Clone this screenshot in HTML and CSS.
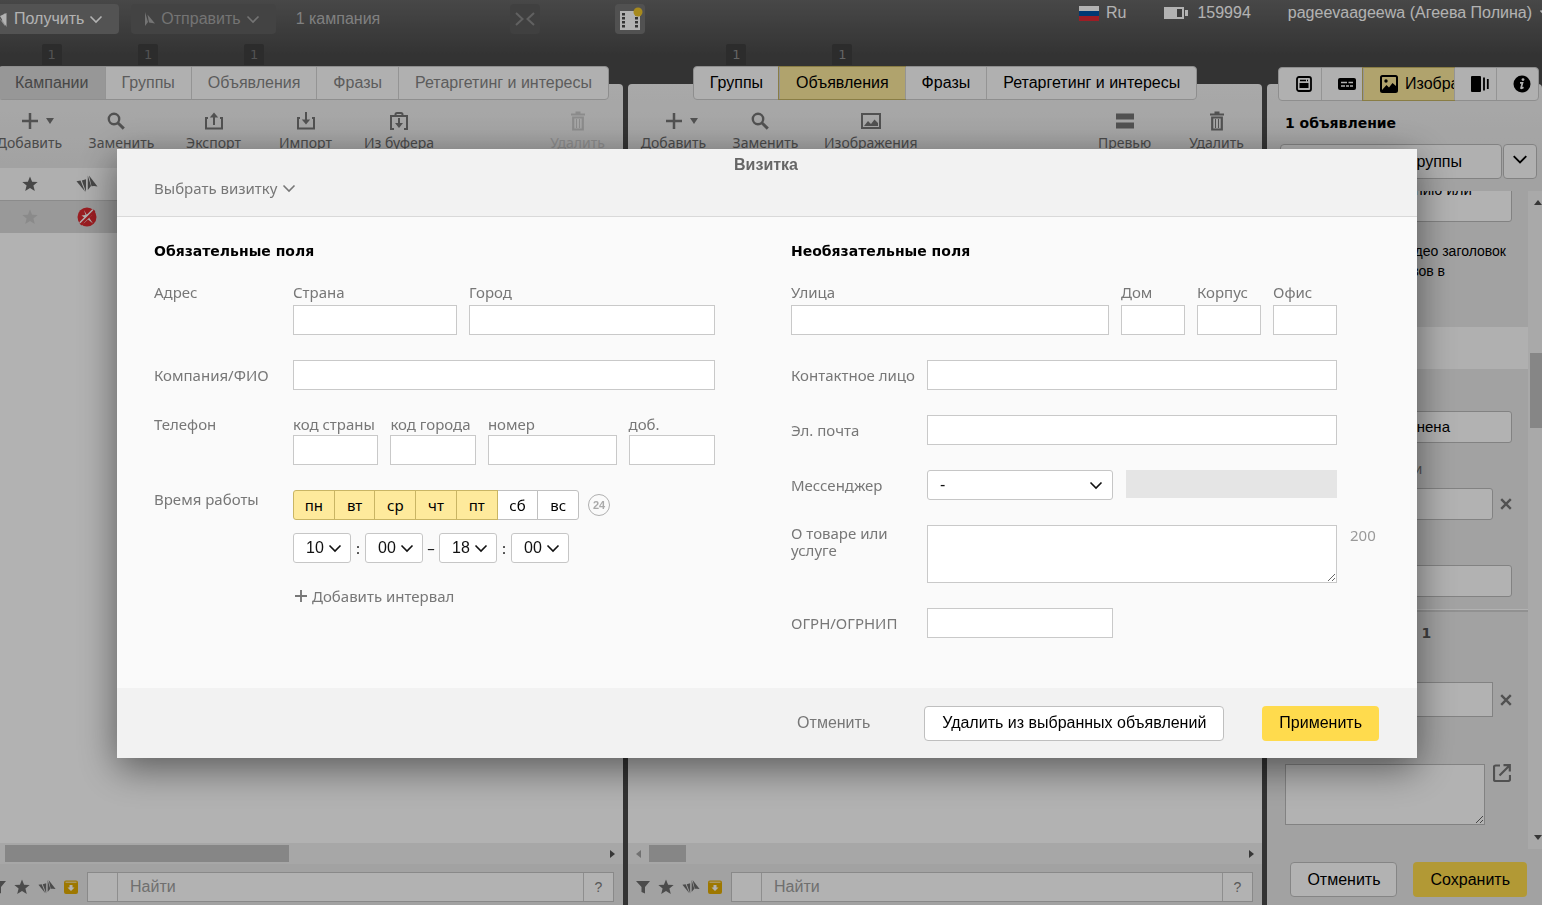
FILE: index.html
```html
<!DOCTYPE html>
<html lang="ru">
<head>
<meta charset="utf-8">
<title>Визитка</title>
<link rel="stylesheet" href="styles.css">
</head>
<body>
<svg class="sprite" aria-hidden="true">
  <symbol id="chev" viewBox="0 0 14 14"><path d="M1.500 4.500 7 10l5.500-5.500" fill="none" stroke="currentColor" stroke-width="1.600"/></symbol>
  <symbol id="plus" viewBox="0 0 16 16"><path d="M8 0v16M0 8h16" stroke="currentColor" stroke-width="2.500" fill="none"/></symbol>
  <symbol id="search" viewBox="0 0 18 18"><circle cx="7" cy="7" r="5.200" fill="none" stroke="currentColor" stroke-width="2.400"/><path d="m10.500 10.500 6.300 6.100" stroke="currentColor" stroke-width="3"/></symbol>
  <symbol id="export" viewBox="0 0 18 18"><path d="M1 6v10.500h16V6M3 6H0M15 6h3M9 13V3" fill="none" stroke="currentColor" stroke-width="2"/><path d="M4.800 5.500 9 .5l4.200 5z" fill="currentColor"/></symbol>
  <symbol id="import" viewBox="0 0 18 18"><path d="M1 6v10.500h16V6M3 6H0M15 6h3M9 0v9" fill="none" stroke="currentColor" stroke-width="2"/><path d="M4.800 7.500 9 12.500l4.200-5z" fill="currentColor"/></symbol>
  <symbol id="buffer" viewBox="0 0 18 18"><path d="M4 17H1V4h16v13h-3M5.500 4V2.500q0-1.500 1.500-1.500h4q1.500 0 1.500 1.500V4M9 6v7" fill="none" stroke="currentColor" stroke-width="2"/><path d="M5 11 9 16l4-5z" fill="currentColor"/></symbol>
  <symbol id="trash" viewBox="0 0 18 20"><path d="M6.500 1.500h5M2 3.500h14" stroke="currentColor" stroke-width="2"/><path d="M4.200 6.500h9.600v12H4.200z" fill="none" stroke="currentColor" stroke-width="2.200"/><path d="M7.500 8v9M10.500 8v9" stroke="currentColor" stroke-width="1"/></symbol>
  <symbol id="image" viewBox="0 0 20 16"><path d="M1 1h18v14H1z" fill="none" stroke="currentColor" stroke-width="2"/><path d="m3 13 4-5 3 3 3.500-4.500L17 10v3z" fill="currentColor"/></symbol>
  <symbol id="preview" viewBox="0 0 18 16"><path d="M0 .5h18v6H0zM0 9.500h18v6H0z" fill="currentColor"/></symbol>
  <symbol id="star" viewBox="0 0 16 16"><path d="m8 .5 2.100 5.200 5.600.3-4.300 3.600 1.400 5.500L8 12.100l-4.800 3 1.400-5.500L.3 6l5.600-.3z" fill="currentColor"/></symbol>
  <symbol id="direct" viewBox="0 0 22 18"><path d="M.5 6.200 4.500 5.500 9 16.500z" fill="currentColor"/><path d="M5.800 5.500 10 4.300V17z" fill="currentColor"/><path d="M11.800.5v14.500l3.200-4zM13 .5l8.500 11-3.500-.5-2.500.2z" fill="currentColor"/></symbol>
  <symbol id="funnel" viewBox="0 0 14 14"><path d="M0 1h14L9 7v6.500L5.500 12V7z" fill="currentColor"/></symbol>
  <symbol id="archive" viewBox="0 0 14 14"><path d="M2 .5h10q2 0 2 2V12q0 2-2 2H2q-2 0-2-2V2.500q0-2 2-2z" fill="#e3ac00"/><path d="M1.500 2.200h11" stroke="#fff" stroke-width=".8"/><path d="M5.500 5h3v2.500h2L7 11 3.500 7.500h2z" fill="#fff"/></symbol>
  <symbol id="noads" viewBox="0 0 20 20"><circle cx="10" cy="10" r="9.500" fill="#dd2a30"/><path d="m7 3 2.500 4.500L15 7.800l-3 2.700 4 6-5-4-4.500 4 1.500-5.500-3.500-2.500 4-.5z" fill="#fff"/><path d="M3.500 17.500 17.500 3.500" stroke="#dd2a30" stroke-width="2.500"/><path d="M2.800 15.800 15.800 2.800" stroke="#fff" stroke-width="1.500"/></symbol>
  <symbol id="cross" viewBox="0 0 12 12"><path d="m1.200 1.200 9.600 9.600m0-9.600L1.200 10.800" stroke="currentColor" stroke-width="2.400"/></symbol>
  <symbol id="external" viewBox="0 0 18 18"><path d="M7 1.500H2.500q-1.500 0-1.500 1.500v12.500Q1 17 2.500 17H15q2 0 2-1.500V11M10.500 1.200h6.300v6.300M16.500 1.500 6.500 11.500" fill="none" stroke="currentColor" stroke-width="2.200"/></symbol>
</svg>

<header class="topbar">
  <button class="top-btn top-btn-get"><svg width="13" height="15" viewBox="0 0 13 15"><path d="M1 3.500 9 14V1L6 4.500V9z" fill="currentColor" opacity=".7"/><path d="M10.500 1v14L4 4z" fill="currentColor"/></svg>Получить<svg width="14" height="14"><use href="#chev"/></svg></button>
  <button class="top-btn top-btn-send"><svg width="13" height="15" viewBox="0 0 13 15"><path d="M2 0v14l3-4zM4.500 2.500 12 11.500l-6-1z" fill="currentColor"/></svg>Отправить<svg width="14" height="14"><use href="#chev"/></svg></button>
  <span class="top-count">1 кампания</span>
  <button class="top-icon top-icon-off" aria-label="Свернуть"><svg width="20" height="16" viewBox="0 0 20 16"><path d="m1 2 6.500 6L1 14M19 2l-6.500 6 6.500 6" fill="none" stroke="currentColor" stroke-width="2"/></svg></button>
  <button class="top-icon top-icon-film" aria-label="Видео"><svg width="30" height="30" viewBox="0 0 30 30"><path d="M5 7h20v19H5z" fill="#fff"/><path d="M8.500 9v16M21.500 9v16" stroke="#494949" stroke-width="3" stroke-dasharray="2.500 1.500"/><circle cx="23" cy="8" r="4.500" fill="#f0c62a"/></svg></button>
  <div class="account">
    <button class="plain lang"><svg width="20" height="15" viewBox="0 0 20 15"><path d="M0 0h20v5H0z" fill="#fff"/><path d="M0 5h20v5H0z" fill="#0052a5"/><path d="M0 10h20v5H0z" fill="#e02a36"/></svg>Ru</button>
    <span class="points"><svg width="24" height="12" viewBox="0 0 24 12"><path d="M0 0h20v12H0zM21 3h3v6h-3z" fill="#fff"/><path d="M13 2h5v8h-5z" fill="#555"/></svg>159994</span>
    <button class="plain user">pageevaageewa (Агеева Полина)<svg width="14" height="14"><use href="#chev"/></svg></button>
  </div>
</header>

<main class="workspace">
  <section class="column column-dim">
    <nav class="tabs">
      <button class="tab tab-active">Кампании<span class="badge">1</span></button>
      <button class="tab">Группы<span class="badge">1</span></button>
      <button class="tab">Объявления<span class="badge">1</span></button>
      <button class="tab">Фразы</button>
      <button class="tab">Ретаргетинг и интересы</button>
    </nav>
    <div class="panel">
      <div class="toolbar">
        <button class="tool"><span class="tool-icon"><svg width="16" height="16"><use href="#plus"/></svg><i class="caret"></i></span>Добавить</button>
        <button class="tool"><span class="tool-icon tool-icon-lead"><svg width="18" height="18"><use href="#search"/></svg></span>Заменить</button>
        <button class="tool"><span class="tool-icon"><svg width="18" height="18"><use href="#export"/></svg></span>Экспорт</button>
        <button class="tool"><span class="tool-icon"><svg width="18" height="18"><use href="#import"/></svg></span>Импорт</button>
        <button class="tool"><span class="tool-icon"><svg width="18" height="18"><use href="#buffer"/></svg></span>Из буфера</button>
        <button class="tool tool-end tool-off" disabled><span class="tool-icon"><svg width="18" height="20"><use href="#trash"/></svg></span>Удалить</button>
      </div>
      <div class="list">
        <table class="grid">
          <thead><tr><th class="c-star"><svg width="16" height="16"><use href="#star"/></svg></th><th class="c-state"><svg width="22" height="18"><use href="#direct"/></svg></th><th></th></tr></thead>
          <tbody><tr><td class="c-star c-faded"><svg width="16" height="16"><use href="#star"/></svg></td><td class="c-state"><svg width="20" height="20"><use href="#noads"/></svg></td><td></td></tr></tbody>
        </table>
      </div>
      <div class="hscroll"><i class="arrow arrow-left"></i><i class="thumb thumb-long"></i><i class="arrow arrow-right"></i></div>
      <div class="finder">
        <svg width="14" height="14"><use href="#funnel"/></svg><svg width="16" height="16"><use href="#star"/></svg><svg width="18" height="16"><use href="#direct"/></svg><svg width="14" height="14"><use href="#archive"/></svg>
        <div class="find-box"><span class="find-cell"></span><input class="find-input" type="text" placeholder="Найти" aria-label="Найти"><button class="find-help">?</button></div>
      </div>
    </div>
  </section>

  <section class="column">
    <nav class="tabs">
      <button class="tab">Группы<span class="badge">1</span></button>
      <button class="tab tab-active">Объявления<span class="badge">1</span></button>
      <button class="tab">Фразы</button>
      <button class="tab">Ретаргетинг и интересы</button>
    </nav>
    <div class="panel">
      <div class="toolbar">
        <button class="tool"><span class="tool-icon"><svg width="16" height="16"><use href="#plus"/></svg><i class="caret"></i></span>Добавить</button>
        <button class="tool"><span class="tool-icon tool-icon-lead"><svg width="18" height="18"><use href="#search"/></svg></span>Заменить</button>
        <button class="tool"><span class="tool-icon"><svg width="20" height="16"><use href="#image"/></svg></span>Изображения</button>
        <button class="tool tool-end"><span class="tool-icon"><svg width="18" height="16"><use href="#preview"/></svg></span>Превью</button>
        <button class="tool"><span class="tool-icon"><svg width="18" height="20"><use href="#trash"/></svg></span>Удалить</button>
      </div>
      <div class="list"></div>
      <div class="hscroll"><i class="arrow arrow-left"></i><i class="thumb thumb-short"></i><i class="arrow arrow-right"></i></div>
      <div class="finder">
        <svg width="14" height="14"><use href="#funnel"/></svg><svg width="16" height="16"><use href="#star"/></svg><svg width="18" height="16"><use href="#direct"/></svg><svg width="14" height="14"><use href="#archive"/></svg>
        <div class="find-box"><span class="find-cell"></span><input class="find-input" type="text" placeholder="Найти" aria-label="Найти"><button class="find-help">?</button></div>
      </div>
    </div>
  </section>

  <aside class="column inspector">
    <nav class="tabs tabs-icons">
      <button class="tab" aria-label="Объявление"><svg width="16" height="16" viewBox="0 0 16 16"><rect x="1" y="1" width="14" height="14" rx="2" fill="none" stroke="currentColor" stroke-width="1.800"/><path d="M4 4.500h6M11 4.500h1" stroke="currentColor" stroke-width="1.500"/><path d="M3.500 7h9v5h-9z" fill="currentColor"/></svg></button>
      <button class="tab" aria-label="Ссылки"><svg width="18" height="12" viewBox="0 0 18 12"><rect width="18" height="12" rx="2" fill="currentColor"/><path d="M3 4.500h6M10.500 4.500h4.500M3 8h4M8 8h3M12 8h3" stroke="#fff" stroke-width="1.300"/></svg></button>
      <button class="tab tab-active tab-image"><svg width="18" height="18" viewBox="0 0 18 18"><rect x="1" y="1" width="16" height="16" rx="1.500" fill="none" stroke="currentColor" stroke-width="2"/><circle cx="6" cy="6" r="1.700" fill="currentColor"/><path d="m2 15 4.500-5 2.500 2.500L12.500 8 16 11v5H2z" fill="currentColor"/></svg>Изображения</button>
      <button class="tab" aria-label="Карусель"><svg width="18" height="16" viewBox="0 0 18 16"><rect y="0" width="10" height="16" rx="1" fill="currentColor"/><path d="M13 1.500v13M16.800 3v10" stroke="currentColor" stroke-width="1.800"/></svg></button>
      <button class="tab" aria-label="Информация"><svg width="18" height="18" viewBox="0 0 18 18"><circle cx="9" cy="9" r="8.500" fill="currentColor"/><circle cx="10" cy="4.600" r="1.400" fill="#fff"/><path d="M7 7.800h2.500L8 13q0 1 2.500-.8" fill="none" stroke="#fff" stroke-width="1.700"/></svg></button>
    </nav>
    <div class="panel">
      <h2 class="inspector-title">1 объявление</h2>
      <div class="split"><button class="split-main">Выбрать из группы</button><button class="split-more" aria-label="Ещё"><svg width="16" height="16"><use href="#chev"/></svg></button></div>
      <div class="scroller">
        <div class="props">
          <textarea class="prop-box prop-note" rows="2" aria-label="Описание">к описанию или</textarea>
          <p class="prop-hint"><span>видео заголовок</span><span class="hint-second">показов в</span></p>
          <div class="prop-band"></div>
          <button class="prop-box prop-status">не заполнена</button>
          <div class="prop-caption">ссылки</div>
          <div class="prop-line"><input class="prop-box" type="text" aria-label="Ссылка"><button class="plain" aria-label="Удалить ссылку"><svg width="12" height="12"><use href="#cross"/></svg></button></div>
          <input class="prop-box prop-extra" type="text" aria-label="Параметр">
          <h3 class="prop-heading">Быстрая ссылка 1</h3>
          <div class="prop-line prop-quick"><input class="prop-box" type="text" aria-label="Быстрая ссылка"><button class="plain" aria-label="Удалить быструю ссылку"><svg width="12" height="12"><use href="#cross"/></svg></button></div>
          <div class="prop-link"><textarea aria-label="Адрес ссылки"></textarea><a href="#" aria-label="Открыть"><svg width="18" height="18"><use href="#external"/></svg></a></div>
        </div>
        <div class="vscroll"><i class="arrow arrow-up"></i><i class="vthumb"></i><i class="arrow arrow-down"></i></div>
      </div>
      <div class="inspector-actions"><button class="btn">Отменить</button><button class="btn btn-yellow">Сохранить</button></div>
    </div>
  </aside>
</main>

<div class="overlay">
  <form class="modal" role="dialog" aria-labelledby="modal-title">
    <header class="modal-head">
      <h1 class="modal-title" id="modal-title">Визитка</h1>
      <button type="button" class="plain pick">Выбрать визитку<svg width="14" height="14"><use href="#chev"/></svg></button>
    </header>
    <div class="modal-body">
      <section class="fields fields-required">
        <h2 class="fields-title">Обязательные поля</h2>
        <div class="row">
          <span class="row-label">Адрес</span>
          <div class="parts parts-address">
            <label class="part">Страна<input class="text" type="text"></label>
            <label class="part">Город<input class="text" type="text"></label>
          </div>
        </div>
        <div class="row row-center">
          <label class="row-label" for="company">Компания/ФИО</label>
          <input class="text" type="text" id="company">
        </div>
        <div class="row">
          <span class="row-label">Телефон</span>
          <div class="parts parts-phone">
            <label class="part">код страны<input class="text" type="text"></label>
            <label class="part">код города<input class="text" type="text"></label>
            <label class="part">номер<input class="text" type="text"></label>
            <label class="part">доб.<input class="text" type="text"></label>
          </div>
        </div>
        <div class="row">
          <span class="row-label">Время работы</span>
          <div class="hours">
            <div class="week">
              <div class="days">
                <button type="button" class="day day-on">пн</button><button type="button" class="day day-on">вт</button><button type="button" class="day day-on">ср</button><button type="button" class="day day-on">чт</button><button type="button" class="day day-on">пт</button><button type="button" class="day">сб</button><button type="button" class="day">вс</button>
              </div>
              <button type="button" class="round">24</button>
            </div>
            <div class="interval">
              <span class="select"><select aria-label="Час начала"><option>10</option></select><svg width="14" height="14"><use href="#chev"/></svg></span><span class="sep">:</span><span class="select"><select aria-label="Минута начала"><option>00</option></select><svg width="14" height="14"><use href="#chev"/></svg></span><span class="sep sep-dash">–</span><span class="select"><select aria-label="Час окончания"><option>18</option></select><svg width="14" height="14"><use href="#chev"/></svg></span><span class="sep">:</span><span class="select"><select aria-label="Минута окончания"><option>00</option></select><svg width="14" height="14"><use href="#chev"/></svg></span>
            </div>
            <button type="button" class="plain add"><svg width="12" height="12"><use href="#plus"/></svg>Добавить интервал</button>
          </div>
        </div>
      </section>

      <section class="fields fields-optional">
        <h2 class="fields-title">Необязательные поля</h2>
        <div class="row row-wide">
          <div class="parts parts-street">
            <label class="part">Улица<input class="text" type="text"></label>
            <label class="part">Дом<input class="text" type="text"></label>
            <label class="part">Корпус<input class="text" type="text"></label>
            <label class="part">Офис<input class="text" type="text"></label>
          </div>
        </div>
        <div class="row row-center">
          <label class="row-label" for="person">Контактное лицо</label>
          <input class="text" type="text" id="person">
        </div>
        <div class="row row-center">
          <label class="row-label" for="email">Эл. почта</label>
          <input class="text" type="text" id="email">
        </div>
        <div class="row row-center">
          <label class="row-label" for="messenger">Мессенджер</label>
          <div class="messenger"><span class="select"><select id="messenger"><option>-</option></select><svg width="14" height="14"><use href="#chev"/></svg></span><input class="disabled" type="text" disabled aria-label="Логин в мессенджере"></div>
        </div>
        <div class="row">
          <label class="row-label row-label-two" for="about">О товаре или услуге</label>
          <textarea class="text about" id="about"></textarea>
          <span class="left-count">200</span>
        </div>
        <div class="row row-center">
          <label class="row-label" for="ogrn">ОГРН/ОГРНИП</label>
          <input class="text text-short" type="text" id="ogrn">
        </div>
      </section>
    </div>
    <footer class="modal-foot">
      <button type="button" class="btn btn-bare">Отменить</button>
      <button type="button" class="btn btn-remove">Удалить из выбранных объявлений</button>
      <button type="button" class="btn btn-yellow">Применить</button>
    </footer>
  </form>
</div>
</body>
</html>
```
FILE: styles.css
```css
* { box-sizing: border-box; }

body {
  margin: 0;
  height: 100vh;
  display: flex;
  flex-direction: column;
  overflow: hidden;
  background: linear-gradient(#676767, #494949 56px);
  font: 16px/20px "Liberation Sans", Arial, sans-serif;
  color: #000;
}

h1, h2, h3, p { margin: 0; }
button, input, select, textarea { font: inherit; color: inherit; margin: 0; border-radius: 0; }
button { padding: 0; cursor: pointer; }
svg { display: block; flex: none; }
.sprite { position: absolute; width: 0; height: 0; }
.plain { border: 0; background: none; display: flex; align-items: center; }

/* Top bar */
.topbar { display: flex; align-items: center; flex: none; height: 38px; color: #fff; white-space: nowrap; }
.top-btn { display: flex; align-items: center; gap: 5px; height: 30px; border: 0; border-radius: 4px; background: #777; }
.top-btn-get { margin-left: -8px; padding: 0 16px 0 4px; }
.top-btn-send { margin-left: 12px; padding: 0 16px 0 12px; background: #606060; color: #a6a6a6; }
.top-count { margin-left: 20px; width: 214px; color: #b8b8b8; }
.top-icon { display: flex; align-items: center; justify-content: center; width: 30px; height: 30px; border: 0; border-radius: 4px; background: #757575; }
.top-icon-off { background: #5c5c5c; color: #8c8c8c; }
.top-icon-film { margin-left: 75px; }
.account { display: flex; align-items: center; align-self: flex-start; height: 26px; margin: 0 -11px 0 auto; }
.lang { gap: 7px; }
.points { display: flex; align-items: center; gap: 9px; margin: 0 37px 0 38px; }
.user { gap: 7px; }

/* Columns */
.workspace { flex: 1; min-height: 0; display: grid; grid-template-columns: 639fr 634fr 275fr; gap: 5px; margin-left: -16px; padding-top: 28px; }
.column { display: flex; flex-direction: column; min-width: 0; min-height: 0; }
.panel { flex: 1; min-height: 0; display: flex; flex-direction: column; margin-top: -16px; border-radius: 4px 4px 0 0; background: linear-gradient(#f2f2f2, #e9e9e9 80px); }

.tabs { align-self: center; display: flex; position: relative; z-index: 1; height: 34px; border: 1px solid #ccc; border-radius: 4px; background: #fdfdfd; white-space: nowrap; }
.tab { position: relative; border: 0; border-left: 1px solid #d4d4d4; padding: 0 16px; background: none; }
.tab:first-child { border-left: 0; border-radius: 3px 0 0 3px; }
.tab-active { background: #fdea9c; box-shadow: 0 0 0 1px #c4b464; }
.badge { position: absolute; left: 50%; bottom: 100%; width: 20px; height: 21px; margin: 0 0 2px -10px; border-radius: 2px 2px 0 0; background: #3f3f3f; color: #909090; font: 13px/21px "DejaVu Sans", sans-serif; text-align: center; }
.column-dim .tab { color: #858585; }
.column-dim .tab-active { background: #d8d8d8; color: #666; box-shadow: none; }
.column-dim .badge { color: #777; }

.toolbar { display: flex; gap: 25px; height: 84px; flex: none; padding: 27px 12px 0; }
.tool { display: flex; flex-direction: column; align-items: center; gap: 2px; min-width: 67px; align-self: flex-start; border: 0; background: none; color: #6a6a6a; font: 14px/20px "Noto Sans", sans-serif; white-space: nowrap; }
.tool-icon { position: relative; display: flex; align-items: center; height: 20px; color: #757575; }
.tool-icon-lead { padding-right: 11px; }
.tool-end { margin-left: auto; }
.tool-off, .tool-off .tool-icon { color: #c8c8c8; }
.caret { position: absolute; left: 100%; top: 7px; margin-left: 8px; border: 4px solid transparent; border-top: 6px solid #757575; border-bottom: 0; }

.list { flex: 1; min-height: 0; background: #fff; }
.grid { width: 100%; border-collapse: collapse; table-layout: fixed; color: #666; }
.grid th { height: 32px; padding: 0; background: #fbfbfb; }
.grid td { height: 33px; padding: 0; background: #dbdbdb; border-top: 1px solid #c8c8c8; }
.grid svg { margin: 0 auto; }
.grid .c-star { width: 64px; padding-left: 28px; }
.grid .c-state { width: 78px; }
.grid .c-faded { color: #c6c6c6; }

.hscroll { display: flex; align-items: center; flex: none; height: 21px; padding: 0 8px; background: #f0f0f0; }
.thumb { height: 17px; background: #c1c1c1; }
.thumb-long { width: 284px; margin-left: 8px; }
.thumb-short { width: 37px; margin-left: 8px; }
.arrow { flex: none; border: 4px solid transparent; }
.arrow-left { border-right: 5px solid #a3a3a3; border-left: 0; }
.arrow-right { border-left: 5px solid #505050; border-right: 0; margin-left: auto; }
.arrow-up { border-bottom: 5px solid #505050; border-top: 0; }
.arrow-down { border-top: 5px solid #505050; border-bottom: 0; margin-top: auto; }

.finder { display: flex; align-items: center; gap: 8px; flex: none; height: 41px; padding: 4px 9px 0 8px; color: #6c6c6c; }
.find-box { flex: 1; min-width: 0; display: flex; height: 30px; margin-left: 1px; border: 1px solid #c4c4c4; background: #fff; }
.find-cell { width: 30px; border-right: 1px solid #ccc; }
.find-input { flex: 1; min-width: 0; border: 0; padding: 0 12px; background: none; }
.find-input::placeholder { color: #a0a0a0; opacity: 1; }
.find-help { width: 30px; border: 0; border-left: 1px solid #ccc; background: none; color: #808080; font-size: 14px; }

/* Inspector */
.tabs-icons { align-self: flex-start; margin: 1px 3px 0 11px; }
.tabs-icons .tab { display: flex; align-items: center; justify-content: center; width: 42px; padding: 0; padding-left: 8px; }
.tabs-icons .tab-image { justify-content: flex-start; gap: 7px; width: 91px; padding-left: 16px; overflow: hidden; }
.inspector .panel { margin-top: -17px; }
.inspector-title { margin: 29px 18px 11px; font: bold 14px/20px "DejaVu Sans", sans-serif; }
.split { display: flex; gap: 1px; flex: none; margin: 0 5px 12px 13px; }
.split button { height: 35px; border: 1px solid #bbb; border-radius: 4px; background: #fdfdfd; }
.split-main { flex: 1; padding-right: 39px; text-align: right; }
.split-more { display: flex; justify-content: center; width: 34px; padding-top: 6px; }
.scroller { flex: 1; min-height: 0; display: flex; overflow: hidden; }
.props { flex: 1; min-width: 0; color: #000; }
.prop-box { display: block; width: 227px; height: 32px; margin-left: 18px; border: 1px solid #bbb; border-radius: 3px; background: #fff; }
.prop-note { height: 51px; margin-top: -20px; padding: 8px 39px 0 0; overflow: hidden; resize: none; text-align: right; font-size: 15px; }
.prop-hint { margin: 19px 22px 46px 18px; font-size: 14px; text-align: right; }
.prop-hint span { display: block; }
.prop-hint .hint-second { padding-right: 61px; }
.prop-band { height: 42px; background: #fdfdfd; }
.prop-status { margin-top: 42px; padding-right: 61px; text-align: right; font-size: 15px; }
.prop-caption { margin: 16px 106px 9px 18px; color: #757575; font-size: 14px; text-align: right; }
.prop-line { display: flex; align-items: center; gap: 7px; color: #757575; }
.prop-line .prop-box { width: 208px; }
.prop-extra { margin-top: 45px; }
.prop-heading { margin-top: 13px; padding: 11px 101px 0 18px; border-top: 2px solid #d0d0d0; box-shadow: 0 -1px #fff; color: #5b5b5b; font: bold 14px/20px "DejaVu Sans", sans-serif; text-align: right; white-space: nowrap; }
.prop-quick { margin-top: 39px; }
.prop-quick .prop-box { height: 35px; border-radius: 0; }
.prop-link { display: flex; align-items: flex-start; gap: 8px; margin: 47px 0 0 18px; }
.prop-link textarea { width: 200px; height: 61px; border: 1px solid #bbb; background: #fff; }
.prop-link a { color: #757575; }
.vscroll { flex: none; display: flex; flex-direction: column; width: 14px; padding: 9px 0 9px 2px; background: #f2f2f2; }
.vscroll .arrow { margin-left: 4px; }
.vthumb { height: 75px; margin-top: 148px; background: #c1c1c1; }
.inspector-actions { display: flex; justify-content: flex-end; gap: 16px; flex: none; padding: 13px 15px 8px; }

.btn { height: 35px; padding: 0 16px; border: 1px solid #bfbfbf; border-radius: 4px; background: #fff; white-space: nowrap; }
.btn-yellow { padding: 0 17px; border: 0; background: #ffdb4d; }

/* Business card dialog */
.overlay { position: fixed; inset: 0; z-index: 2; display: flex; align-items: center; justify-content: center; padding: 2px 8px 0 0; background: rgba(0, 0, 0, .3); }
.modal { width: 1300px; max-width: 100%; background: #fafafa; box-shadow: 0 10px 36px rgba(0, 0, 0, .5); color: #777; font: 15px/18px "Noto Sans", sans-serif; }
.modal-head { height: 68px; padding: 6px 39px 0 37px; border-bottom: 1px solid #d9d9d9; background: #f2f2f2; }
.modal-title { color: #666; font: bold 16px/20px "Liberation Sans", Arial, sans-serif; text-align: center; }
.pick { gap: 5px; margin-top: 4px; color: #777; }
.modal-body { display: grid; grid-template-columns: 561fr 588fr; gap: 76px; padding: 24px 38px 50px 37px; }
.fields { display: flex; flex-direction: column; gap: 25px; }
.fields-title { margin-bottom: -3px; color: #000; font: bold 14px/20px "DejaVu Sans", sans-serif; }
.row { display: grid; grid-template-columns: 139px 1fr; }
.row-center { align-items: center; }
.fields-optional .row { grid-template-columns: 136px 1fr 42px; }
.fields-optional .row-wide { grid-template-columns: 1fr 42px; }
.row-label-two { padding-right: 16px; line-height: 17px; }
.parts { display: grid; gap: 12px; }
.parts-address { grid-template-columns: 164fr 246fr; }
.parts-phone { grid-template-columns: 85fr 85fr 128fr 86fr; }
.parts-street { grid-template-columns: 318fr 64fr 64fr 64fr; }
.part { display: flex; flex-direction: column; gap: 4px; min-width: 0; white-space: nowrap; }
.parts-phone .part { gap: 2px; }
.text { width: 100%; height: 30px; border: 1px solid #c9c9c9; background: #fff; }
.text-short { width: 186px; }
.about { display: block; height: 58px; }
.left-count { padding: 1px 0 0 13px; color: #999; }

.hours { display: flex; flex-direction: column; align-items: flex-start; }
.week { display: flex; align-items: center; gap: 9px; }
.days { display: flex; width: 286px; height: 30px; }
.day { flex: 1; margin-right: -1px; border: 1px solid #c0c0c0; background: #fff; color: #000; }
.day-on { position: relative; border-color: #c9b564; background: #feea9c; }
.day:first-child { border-radius: 3px 0 0 3px; }
.day:last-child { margin-right: 0; border-radius: 0 3px 3px 0; }
.round { width: 22px; height: 22px; border: 1px solid #b0b0b0; border-radius: 50%; background: none; color: #aaa; font: bold 11px/20px "Liberation Sans", Arial, sans-serif; }
.interval { display: flex; align-items: center; margin-top: 13px; color: #222; }
.select { position: relative; display: block; width: 58px; height: 30px; color: #111; }
.select select { width: 100%; height: 100%; padding: 0 0 0 12px; border: 1px solid #c6c6c6; border-radius: 3px; background: #fff; appearance: none; font: 16px/20px "Liberation Sans", Arial, sans-serif; }
.select svg { position: absolute; right: 9px; top: 8px; pointer-events: none; }
.sep { width: 14px; text-align: center; }
.sep-dash { width: 16px; }
.add { gap: 5px; margin: 24px 0 0 2px; }
.messenger { display: grid; grid-template-columns: 186fr 211fr; gap: 13px; align-items: start; }
.messenger .select { width: auto; }
.messenger .select svg { right: 10px; }
.disabled { width: 100%; height: 28px; border: 0; background: #e5e5e5; }

.modal-foot { display: flex; align-items: center; justify-content: flex-end; height: 70px; padding: 0 38px; background: #f2f2f2; color: #000; font: 16px/20px "Liberation Sans", Arial, sans-serif; }
.btn-bare { border: 0; background: none; color: #777; }
.btn-remove { margin: 0 38px; padding: 0 17px; }
```
